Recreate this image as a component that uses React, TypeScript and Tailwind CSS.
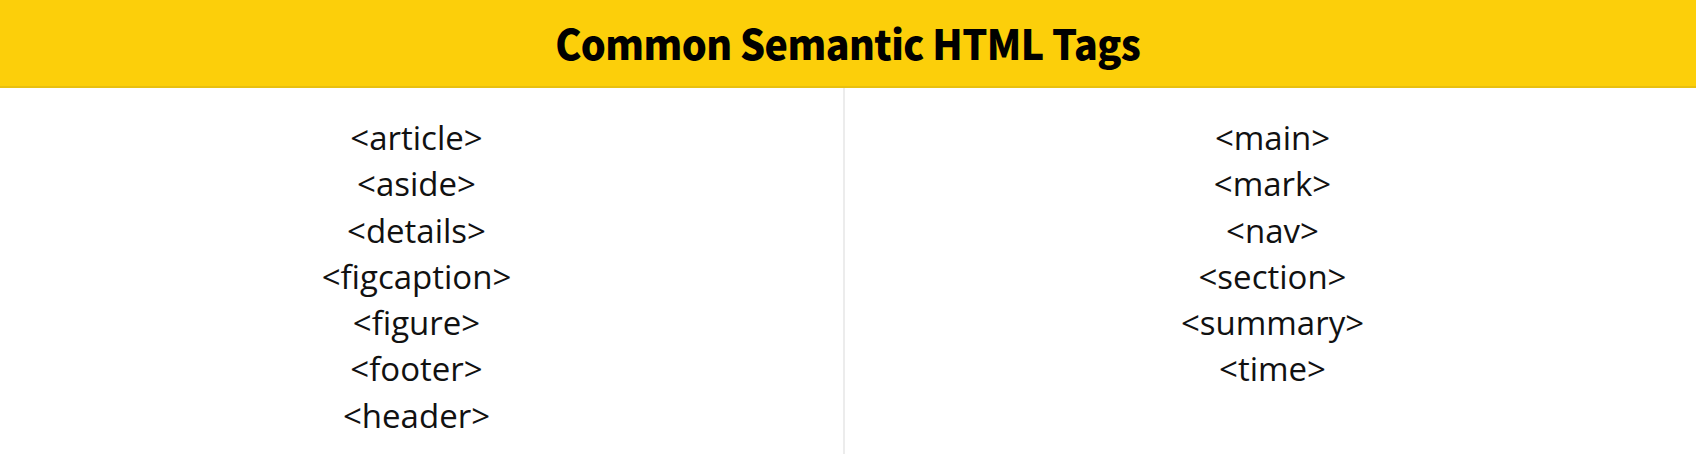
const leftTags = ["article", "aside", "details", "figcaption", "figure", "footer", "header"];
const rightTags = ["main", "mark", "nav", "section", "summary", "time"];

function TagColumn({ tags, border }: { tags: string[]; border?: boolean }) {
  return (
    <div
      className={
        "flex flex-col items-center pt-[27px] " +
        (border ? "border-r-2 border-[#ececec] pr-[10px]" : "pl-[4px]")
      }
    >
      {tags.map((t) => (
        <div
          key={t}
          className="h-[46.3px] leading-[46px] text-[33px] text-[#111]"
          style={{ fontFamily: '"Open Sans", "Noto Sans CJK KR", sans-serif' }}
        >
          {"<" + t + ">"}
        </div>
      ))}
    </div>
  );
}

export default function App() {
  return (
    <div
      className="w-[1696px] h-[454px] bg-white overflow-hidden"
      style={{ fontFamily: '"Noto Sans CJK KR", "Noto Sans", sans-serif' }}
    >
      <div className="h-[88px] bg-[#fccf0a] border-b-2 border-[#e8c010] flex items-center justify-center">
        <h1 className="text-[41px] font-black text-black tracking-[-0.6px] scale-x-[0.96]">
          Common Semantic HTML Tags
        </h1>
      </div>
      <div className="grid grid-cols-[845px_1fr] h-[366px]">
        <TagColumn tags={leftTags} border />
        <TagColumn tags={rightTags} />
      </div>
    </div>
  );
}
